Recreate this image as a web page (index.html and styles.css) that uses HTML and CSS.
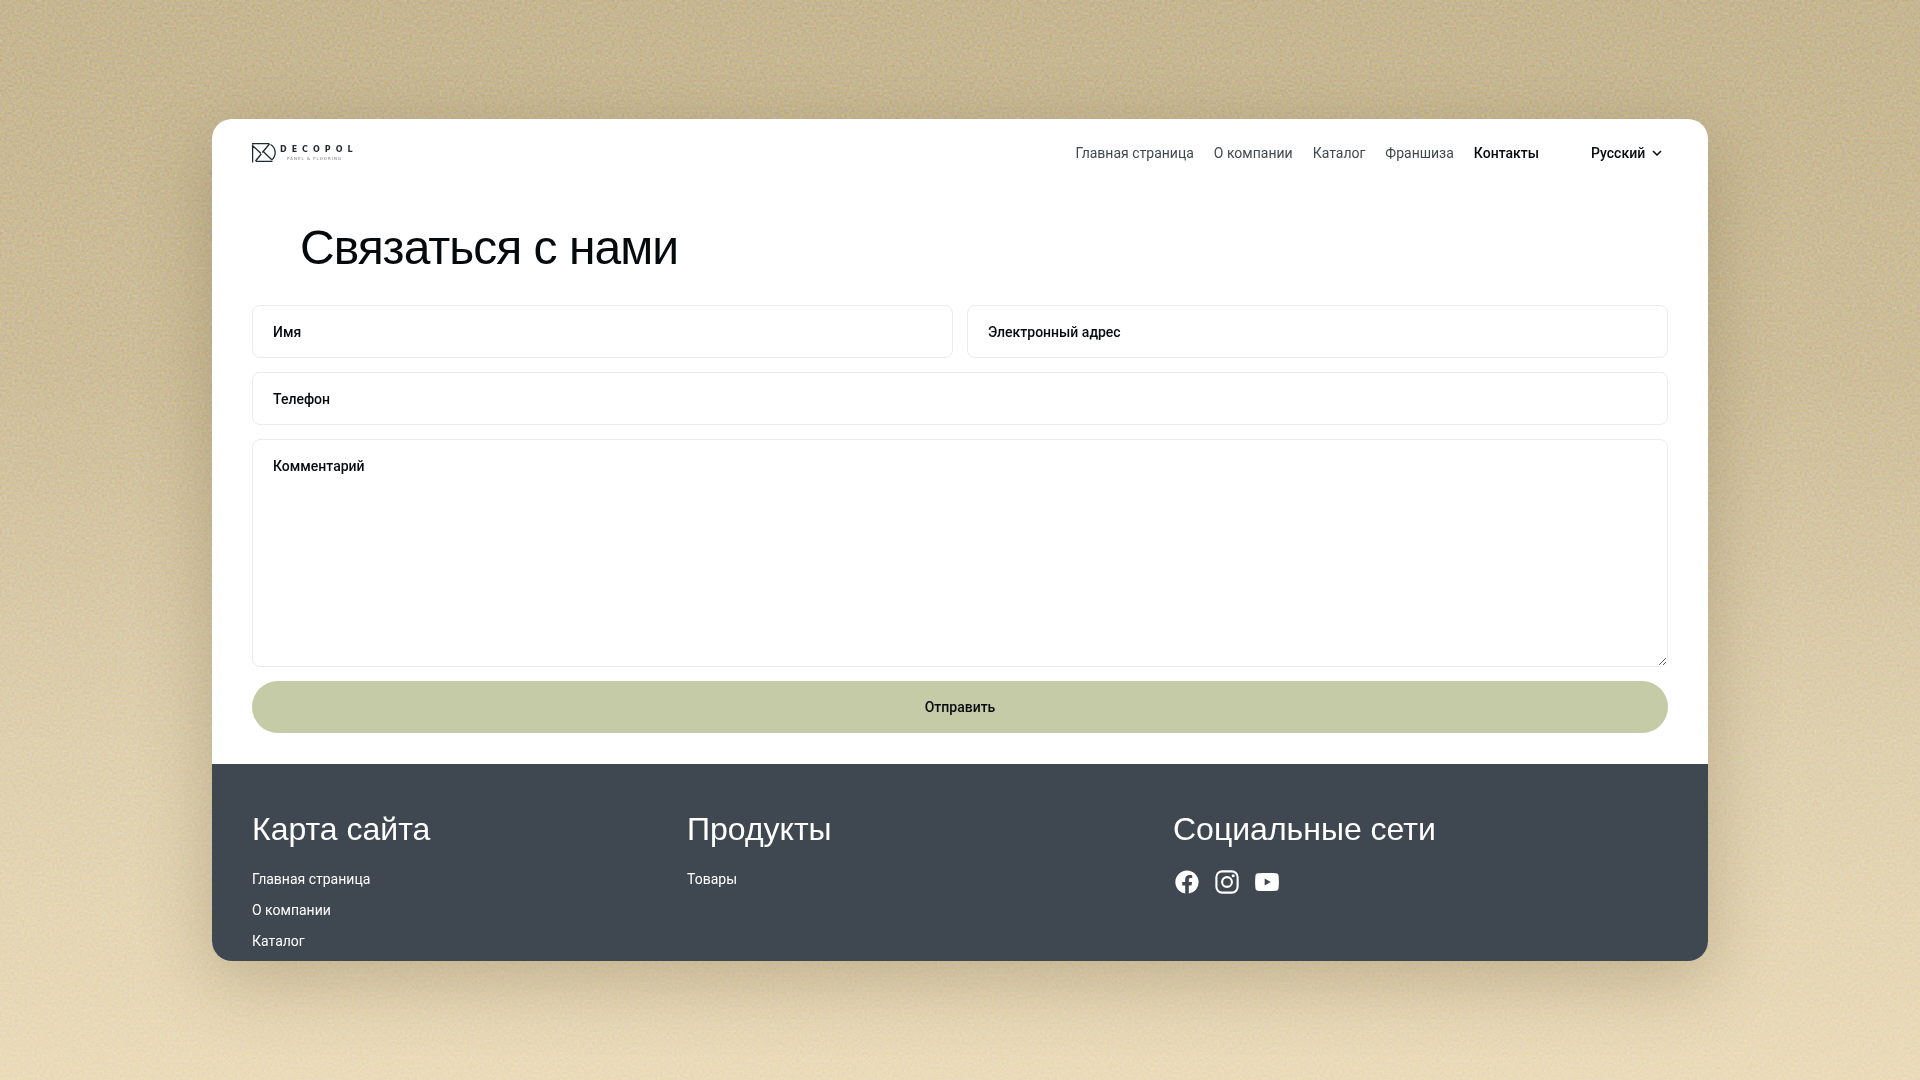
FILE: index.html
```html
<!DOCTYPE html>
<html lang="ru">
<head>
    <meta charset="UTF-8">
    <meta name="viewport" content="width=device-width, initial-scale=1.0">
    <title>Decopol - Контакты</title>
    <link rel="stylesheet" href="styles.css">
</head>
<body>
    <svg class="grain" aria-hidden="true">
        <filter id="grain" color-interpolation-filters="sRGB">
            <feTurbulence type="fractalNoise" baseFrequency="0.4" numOctaves="2" seed="4"/>
            <feColorMatrix values="1.2 0 0 0 -0.1  0 1.2 0 0 -0.1  0 0 1.2 0 -0.1  0 0 0 0 0.25"/>
        </filter>
        <rect width="100%" height="100%" filter="url(#grain)"/>
    </svg>

    <div class="page">
        <header class="header">
            <a href="#" class="logo" aria-label="Decopol">
                <svg width="120" height="20" viewBox="0 0 120 20">
                    <g fill="none" stroke="#1f2a33" stroke-width="1.3">
                        <path d="M0.6 1.500v18M0 0.600h17.500M1 3l8 7.500M17.500 1L10.300 9.500M9.300 11L3.500 18M11.500 8.700l8 7.800M3.500 18.400h17M18.500 1.500c6 3.500 6 12 1 15.500"/>
                    </g>
                    <text class="logo-name" x="28" y="9">DECOPOL</text>
                    <text class="logo-sub" x="35" y="17">PANEL &amp; FLOORING</text>
                </svg>
            </a>
            <nav class="nav">
                <a href="#">Главная страница</a>
                <a href="#">О компании</a>
                <a href="#">Каталог</a>
                <a href="#">Франшиза</a>
                <a href="#" class="active">Контакты</a>
            </nav>
            <div class="lang">
                <select aria-label="Язык">
                    <option>Русский</option>
                    <option>English</option>
                </select>
                <svg width="10" height="6" viewBox="0 0 10 6" aria-hidden="true">
                    <path d="M1 1l4 4 4-4" fill="none" stroke="#060a0c" stroke-width="1.500"/>
                </svg>
            </div>
        </header>

        <main class="contact">
            <h1 class="title">Связаться с нами</h1>
            <form class="form">
                <input type="text" name="name" aria-label="Имя" placeholder="Имя">
                <input type="email" name="email" aria-label="Электронный адрес" placeholder="Электронный адрес">
                <input type="tel" name="phone" class="wide" aria-label="Телефон" placeholder="Телефон">
                <textarea name="comment" class="wide" aria-label="Комментарий" placeholder="Комментарий"></textarea>
                <button type="submit" class="wide">Отправить</button>
            </form>
        </main>

        <footer class="footer">
            <div>
                <h2>Карта сайта</h2>
                <ul class="links">
                    <li><a href="#">Главная страница</a></li>
                    <li><a href="#">О компании</a></li>
                    <li><a href="#">Каталог</a></li>
                </ul>
            </div>
            <div>
                <h2>Продукты</h2>
                <ul class="links">
                    <li><a href="#">Товары</a></li>
                </ul>
            </div>
            <div>
                <h2>Социальные сети</h2>
                <div class="socials">
                    <a href="#" aria-label="Facebook">
                        <svg width="28" height="28" viewBox="0 0 24 24">
                            <path fill="#fff" d="M12 2.040C6.500 2.040 2 6.530 2 12.060c0 5 3.660 9.150 8.440 9.900v-7H7.900v-2.900h2.540V9.850c0-2.510 1.490-3.890 3.780-3.890 1.090 0 2.230.190 2.230.190v2.470h-1.260c-1.240 0-1.630.770-1.630 1.560v1.880h2.780l-.450 2.900h-2.330v7A10 10 0 0 0 22 12.060C22 6.530 17.500 2.040 12 2.040z"/>
                        </svg>
                    </a>
                    <a href="#" aria-label="Instagram">
                        <svg width="28" height="28" viewBox="0 0 24 24">
                            <g fill="none" stroke="#fff" stroke-width="1.800">
                                <rect x="2.900" y="2.900" width="18.200" height="18.200" rx="5"/>
                                <circle cx="12" cy="12" r="4.200"/>
                            </g>
                            <circle cx="17.300" cy="6.700" r="1.300" fill="#fff"/>
                        </svg>
                    </a>
                    <a href="#" aria-label="YouTube">
                        <svg width="28" height="28" viewBox="0 0 24 24">
                            <path fill="#fff" fill-rule="evenodd" d="M12 4.300c3 0 6 .1 7.800.3 1.200.1 2 .9 2.100 2.100.4 3 .4 7.600 0 10.600-.1 1.200-.9 2-2.100 2.100-3.600.4-12 .4-15.600 0-1.200-.1-2-.9-2.100-2.100-.4-3-.4-7.600 0-10.600.1-1.200.9-2 2.100-2.100 1.800-.2 4.800-.3 7.800-.3zM10 9v6l5.200-3z"/>
                        </svg>
                    </a>
                </div>
            </div>
        </footer>
    </div>
</body>
</html>
```

FILE: styles.css
```css
* {
    box-sizing: border-box;
}

body {
    margin: 0;
    min-height: 100vh;
    padding: 119px 212px;
    background: linear-gradient(#c6b691, #cebe9a 35%, #dfd1af 70%, #eadbb9);
    font-family: Roboto, "Noto Sans", sans-serif;
    font-size: 14px;
    line-height: 20px;
    color: #060a0c;
}

a {
    color: inherit;
    text-decoration: none;
}

.grain {
    position: absolute;
    top: 0;
    left: 0;
    width: 100%;
    height: 100%;
    mix-blend-mode: overlay;
}

.page {
    position: relative;
    background-color: #fff;
    border-radius: 20px;
    overflow: hidden;
    box-shadow: 0 20px 70px rgba(90, 75, 40, 0.28);
}

.header {
    display: flex;
    align-items: center;
    padding: 24px 46px 0 40px;
}

.logo {
    display: flex;
    margin-right: auto;
}

.logo-name {
    font: bold 8px "DejaVu Sans", sans-serif;
    letter-spacing: 5px;
    fill: #1f2a33;
}

.logo-sub {
    font: 4px "DejaVu Sans", sans-serif;
    letter-spacing: 1px;
    fill: #777;
}

.nav {
    display: flex;
    gap: 20px;
    color: #42494e;
}

.nav .active {
    color: #060a0c;
    font-weight: 500;
}

.lang {
    display: flex;
    align-items: center;
    gap: 6px;
    margin-left: 52px;
}

.lang select {
    appearance: none;
    border: none;
    padding: 0;
    background: none;
    font: inherit;
    font-weight: 500;
    color: inherit;
}

.contact {
    padding: 56px 40px 31px;
}

.title {
    margin: 0 0 28px 48px;
    font-family: "Liberation Sans", Arial, sans-serif;
    font-size: 48px;
    line-height: 58px;
    font-weight: 400;
    letter-spacing: -1px;
}

.form {
    display: grid;
    grid-template-columns: 1fr 1fr;
    gap: 14px;
}

.wide {
    grid-column: 1 / -1;
}

.form input,
.form textarea {
    height: 53px;
    padding: 16px 20px;
    border: 1px solid #ebebeb;
    border-radius: 8px;
    background-color: #fff;
    font: inherit;
    font-weight: 500;
    color: inherit;
}

.form textarea {
    height: 228px;
    resize: vertical;
}

.form ::placeholder {
    color: #060a0c;
    opacity: 1;
}

.form button {
    padding: 16px;
    border: none;
    border-radius: 26px;
    background-color: #c4cba6;
    font: inherit;
    font-weight: 500;
    color: #060a0c;
    cursor: pointer;
}

.footer {
    display: grid;
    grid-template-columns: 435fr 486fr 495fr;
    padding: 45px 40px 10px;
    background-color: #3f4850;
    color: #fff;
}

.footer h2 {
    margin: 0 0 18px;
    font-family: "Liberation Sans", Arial, sans-serif;
    font-size: 32px;
    line-height: 40px;
    font-weight: 400;
}

.links {
    display: flex;
    flex-direction: column;
    gap: 11px;
    margin: 0;
    padding: 2px 0 0;
    list-style: none;
}

.socials {
    display: flex;
    gap: 12px;
    padding-top: 1px;
}

.socials a,
.socials svg {
    display: block;
}
```
